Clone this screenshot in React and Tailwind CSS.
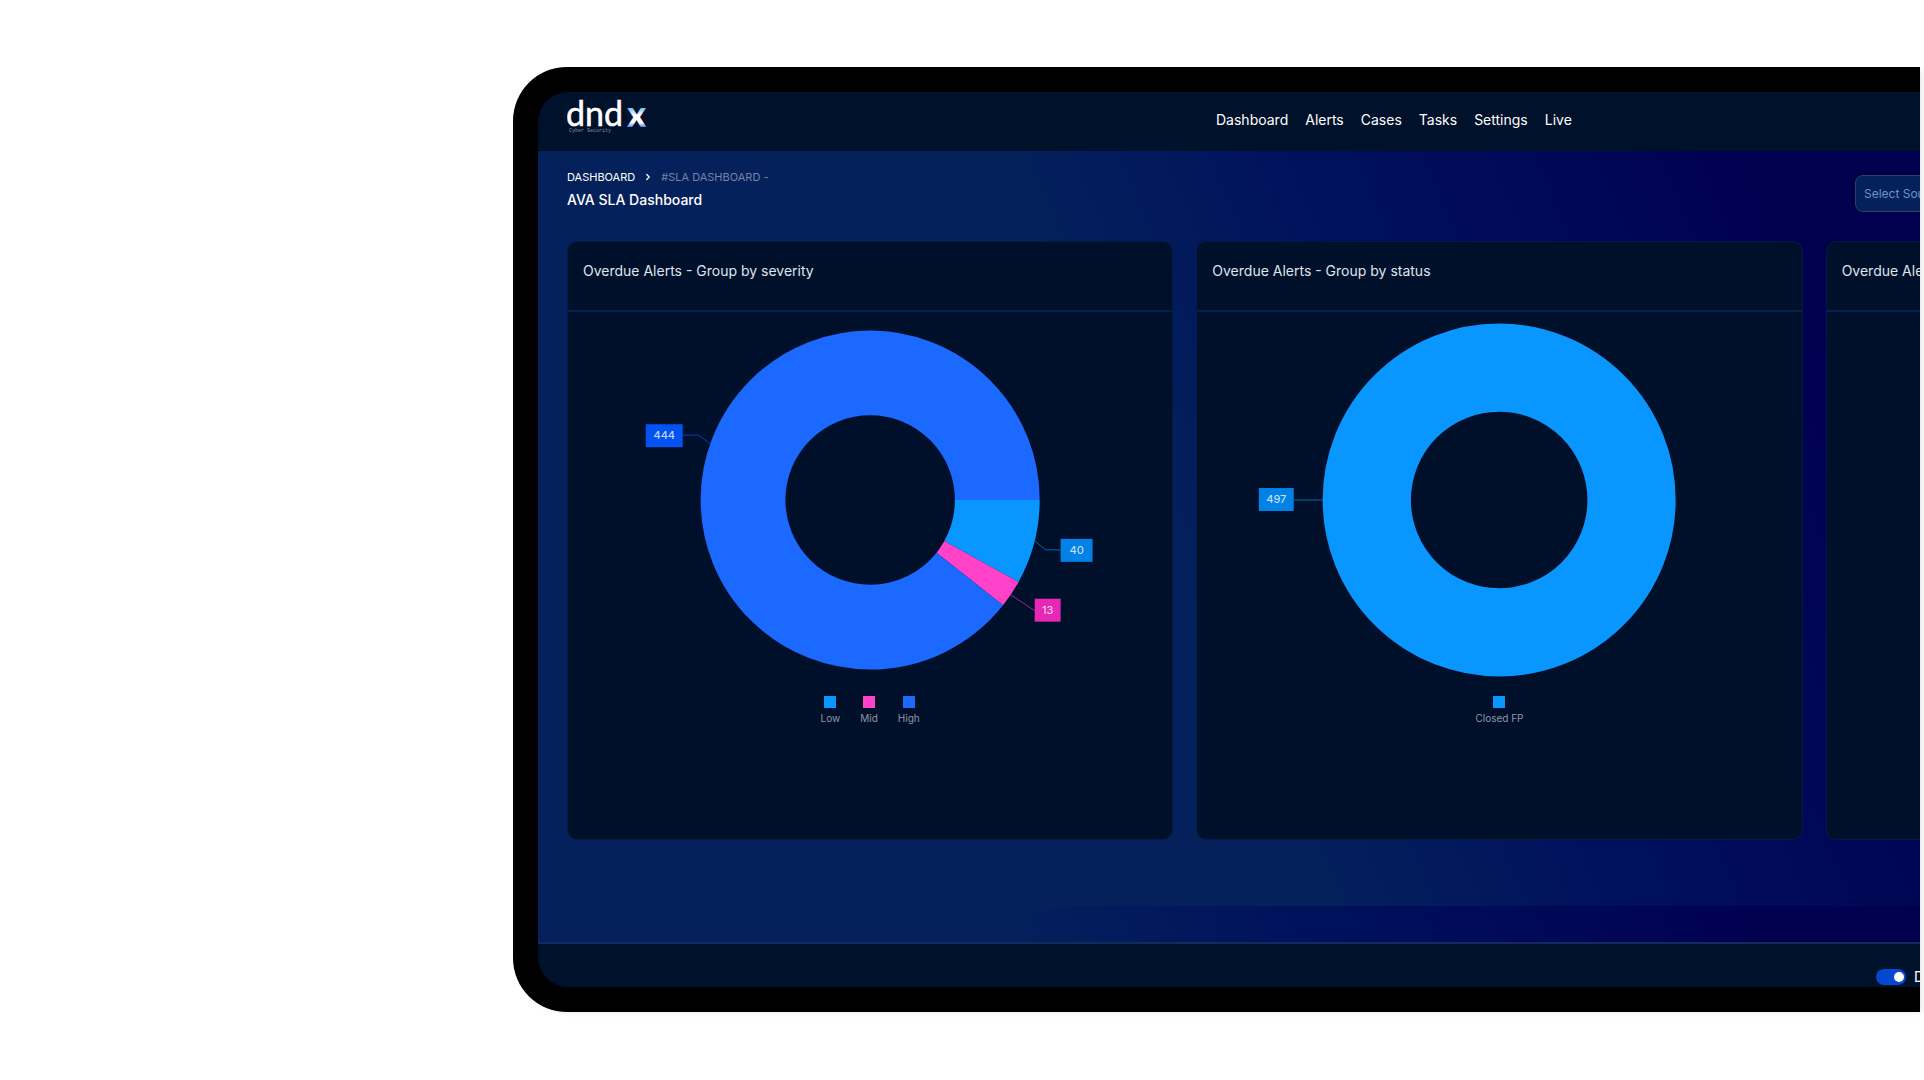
import { ChevronRight } from 'lucide-react';

const NAV_ITEMS = ['Dashboard', 'Alerts', 'Cases', 'Tasks', 'Settings', 'Live'];

const SEVERITY = {
  title: 'Overdue Alerts - Group by severity',
  radius: 170,
  slices: [
    { label: 'Low', value: 40, color: '#0a96ff' },
    { label: 'Mid', value: 13, color: '#ff42c8' },
    { label: 'High', value: 444, color: '#1b69ff' },
  ],
  callouts: [
    { value: 444, x: -225, y: -76, w: 37, color: '#0353f3', line: '-188,-65 -172,-65 -160,-56' },
    { value: 40, x: 191, y: 39, w: 32, color: '#0281e6', line: '165,41 176,50 191,50' },
    { value: 13, x: 165, y: 99, w: 26, color: '#e827b4', line: '141,95 165,111' },
  ],
};

const STATUS = {
  title: 'Overdue Alerts - Group by status',
  radius: 177,
  slices: [{ label: 'Closed FP', value: 497, color: '#0a96ff' }],
  callouts: [
    { value: 497, x: -241, y: -12, w: 35, color: '#0281e6', line: '-206,0 -177,0' },
  ],
};

function Donut({ radius, slices, callouts }) {
  // the ring is a thick stroke, half of the radius wide
  const mid = radius * 0.75;
  const length = 2 * Math.PI * mid;
  const total = slices.reduce((sum, s) => sum + s.value, 0);
  let start = 0;

  return (
    <svg viewBox="-303 -188 606 376" className="h-[376px] w-full" role="img">
      {slices.map((s) => {
        const part = (s.value / total) * length;
        const offset = -start;
        start += part;
        return (
          <circle
            key={s.label}
            r={mid}
            fill="none"
            stroke={s.color}
            strokeWidth={radius / 2}
            strokeDasharray={`${part} ${length - part}`}
            strokeDashoffset={offset}
          />
        );
      })}
      {callouts.map((c) => (
        <g key={c.value}>
          <polyline points={c.line} fill="none" stroke={c.color} strokeOpacity="0.75" />
          <rect x={c.x} y={c.y} width={c.w} height="23" fill={c.color} />
          <text
            x={c.x + c.w / 2}
            y={c.y + 15}
            textAnchor="middle"
            className="fill-white/75 text-[11px] font-medium"
          >
            {c.value}
          </text>
        </g>
      ))}
    </svg>
  );
}

function ChartCard({ title, chart }) {
  return (
    <section className="min-h-[599px] overflow-hidden rounded-[10px] border border-[#04215b]/60 bg-[#00102a]">
      <header className="h-[70px] border-b-2 border-[#06204d] px-[15px] pt-[19px]">
        <h2 className="text-[14px] leading-5 text-[#dfe5ee]">{title}</h2>
      </header>
      {chart && (
        <>
          <Donut radius={chart.radius} slices={chart.slices} callouts={chart.callouts} />
          <ul className="mt-2 flex justify-center gap-5">
            {chart.slices.map((s) => (
              <li key={s.label} className="flex flex-col items-center gap-[2px]">
                <span className="size-3" style={{ backgroundColor: s.color }} />
                <span className="text-[10px] leading-4 text-[#9297a3]">{s.label}</span>
              </li>
            ))}
          </ul>
        </>
      )}
    </section>
  );
}

function Logo() {
  return (
    <svg viewBox="0 0 84 44" className="h-11 w-[84px]" role="img" aria-label="dndx">
      <defs>
        <linearGradient id="logo-x" x1="0" y1="0" x2="0" y2="1">
          <stop offset="0.4" stopColor="#7cc0f5" />
          <stop offset="0.55" stopColor="#ffffff" />
          <stop offset="0.72" stopColor="#ffffff" />
          <stop offset="0.85" stopColor="#1257d8" />
        </linearGradient>
      </defs>
      <text x="-1" y="34" fill="#fff" stroke="#fff" strokeWidth="0.5" fontFamily="Lato, sans-serif" fontSize="34">dnd</text>
      <text x="60" y="35" fill="url(#logo-x)" fontFamily="Lato, sans-serif" fontSize="36" fontWeight="900">x</text>
      <text x="2" y="40" fill="#8a93a8" fontFamily="Liberation Mono, monospace" fontSize="5">Cyber Security</text>
    </svg>
  );
}

function Header() {
  return (
    <header className="flex h-[59px] items-start bg-[#00112b] pr-[27px] pl-[29px]">
      <a href="#" className="w-[649px]">
        <Logo />
      </a>
      <nav className="flex gap-[17px] pt-[18px]">
        {NAV_ITEMS.map((item) => (
          <a key={item} href="#" className="text-[14px] leading-5 text-white">{item}</a>
        ))}
      </nav>
    </header>
  );
}

function PageTitle() {
  return (
    <div className="flex justify-between">
      <div>
        <nav aria-label="Breadcrumb" className="flex items-center text-[11px] leading-4">
          <a href="#" className="text-white">DASHBOARD</a>
          <ChevronRight size={10} strokeWidth={3} className="mx-2 text-white" />
          <span className="text-[#7583a6]">#SLA DASHBOARD -</span>
        </nav>
        <h1 className="mt-[3px] text-[14px] leading-6 font-medium text-white">AVA SLA Dashboard</h1>
      </div>
      <div className="w-[577px] pt-[6px]">
        <select
          aria-label="Source"
          className="h-[37px] w-[200px] appearance-none rounded-lg border border-[#34405c] bg-[#04215b] px-2 text-[12px] text-[#6c93c8]"
        >
          <option>Select Source</option>
        </select>
      </div>
    </div>
  );
}

function Footer() {
  return (
    <footer className="flex h-[45px] justify-end border-t-2 border-[#122a5c] bg-[#00112b] px-7">
      <label className="flex w-[555px] items-center gap-2 pt-[22px] text-[14px] leading-5 text-white">
        <span className="relative flex items-center">
          <input
            type="checkbox"
            defaultChecked
            className="peer h-4 w-[30px] appearance-none rounded-full bg-[#2a3550] checked:bg-[#0348cf]"
          />
          <span className="pointer-events-none absolute left-1 size-[10px] rounded-full bg-white peer-checked:left-[18px]" />
        </span>
        Dark Mode
      </label>
    </footer>
  );
}

export default function App() {
  return (
    <div className="grid min-h-screen grid-cols-[513fr_1407fr] items-start overflow-hidden bg-white py-[67px] pr-1 font-['Inter','Noto_Sans',sans-serif]">
      <div />
      {/* device frame, its right side runs out of view */}
      <div className="min-w-0 rounded-l-[54px] bg-black py-[25px] pl-[25px] shadow-[4px_2px_6px_-2px_rgb(0_0_0/0.1)]">
        <div className="overflow-hidden rounded-l-[30px]">
          <div className="w-[139%]">
            <Header />
            <main className="min-h-[791px] bg-[linear-gradient(67deg,#04215b_46%,#00125c_62%,#000a58_75%,#00004f_90%)] bg-[length:72%_755px] pt-[18px] pr-[27px] pl-[29px]">
              <PageTitle />
              <div className="mt-[29px] grid grid-cols-3 gap-[23px]">
                <ChartCard title={SEVERITY.title} chart={SEVERITY} />
                <ChartCard title={STATUS.title} chart={STATUS} />
                <ChartCard title="Overdue Alerts - Group by type" />
              </div>
            </main>
            <Footer />
          </div>
        </div>
      </div>
    </div>
  );
}
